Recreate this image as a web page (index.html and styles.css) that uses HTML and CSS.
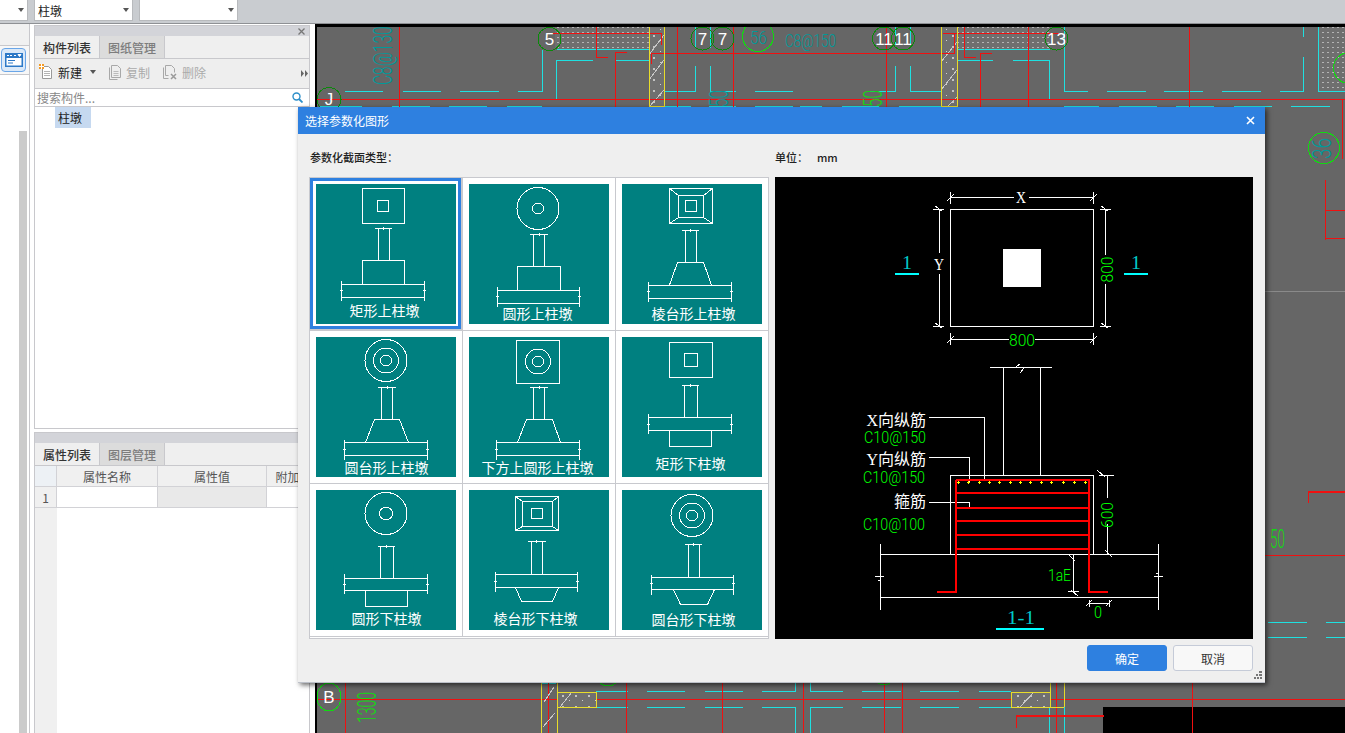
FILE: index.html
```html
<!DOCTYPE html>
<html lang="zh-CN">
<head>
<meta charset="utf-8">
<title>选择参数化图形</title>
<link rel="stylesheet" href="styles.css">
</head>
<body>
<header class="topbar">
  <div class="combo combo-a"><i class="caret"></i></div>
  <div class="combo combo-b"><span>柱墩</span><i class="caret"></i></div>
  <div class="combo combo-b"><i class="caret"></i></div>
</header>
<div class="main">
  <aside class="rail">
    <div class="rail-head"></div>
    <div class="rail-row">
      <button class="rail-btn">
        <svg width="18" height="14" viewBox="0 0 18 14"><rect x="0" y="0" width="18" height="14" fill="#2d79c7"/><rect x="1.500" y="5" width="15" height="7.500" fill="#fff"/><path d="M2 2.500h2M5 2.500h2M9 2.500h2M13 1.500h3l-1.500 2z" stroke="#fff" fill="#fff"/><path d="M3 7.500h7M3 10h5" stroke="#2d79c7"/></svg>
      </button>
    </div>
    <div class="rail-body"><div class="rail-track"></div></div>
  </aside>
  <div class="panels">
    <section class="panel panel-top">
      <div class="strip"><svg class="strip-x" width="7" height="7" viewBox="0 0 7 7"><path d="M.5.500l6 6M6.500.500l-6 6" stroke="#777" stroke-width="1.300"/></svg></div>
      <div class="tabs"><div class="tab on">构件列表</div><div class="tab">图纸管理</div></div>
      <div class="tools">
        <span class="tool">
          <svg width="15" height="16" viewBox="0 0 15 16"><path d="M3.500 2.500h6l3 3v9h-9z" fill="#fff" stroke="#9a9a9a"/><path d="M5 7.500h6M5 9.500h6M5 11.500h6" stroke="#b5b5b5"/><rect x="0" y="0" width="5" height="5" fill="#f59a23"/><path d="M0 2.500h5M2.500 0v5" stroke="#fff"/></svg>
          <b class="tool-on">新建</b><i class="caret caret-small"></i>
        </span>
        <span class="tool">
          <svg width="13" height="15" viewBox="0 0 13 15"><path d="M.5 2.500v12h8M2.500.500h6l3 3v9h-9z" fill="none" stroke="#a8a8a8"/><path d="M4.500 6.500h5M4.500 8.500h5M4.500 10.500h5" stroke="#bbb"/></svg>
          <b class="tool-off">复制</b>
        </span>
        <span class="tool">
          <svg width="15" height="15" viewBox="0 0 15 15"><path d="M.5 2.500v11h5M2.500.500h6l3 3v4M2.500.500v10h3" fill="none" stroke="#a8a8a8"/><path d="M8 9l5 5M13 9l-5 5" stroke="#9a9a9a" stroke-width="1.500"/></svg>
          <b class="tool-off">删除</b>
        </span>
        <svg class="more" width="7" height="7" viewBox="0 0 7 7"><path d="M0 0l3 3.500-3 3.500zM4 0l3 3.500-3 3.500z" fill="#666"/></svg>
      </div>
      <div class="search"><span>搜索构件...</span>
        <svg width="11" height="11" viewBox="0 0 11 11"><circle cx="4.500" cy="4.500" r="3.500" fill="none" stroke="#2d8fc9" stroke-width="1.400"/><path d="M7 7l3.500 3.500" stroke="#2d8fc9" stroke-width="1.800"/></svg>
      </div>
      <div class="tree"><span class="tree-item">柱墩</span></div>
    </section>
    <section class="panel panel-bottom">
      <div class="strip"></div>
      <div class="tabs"><div class="tab on">属性列表</div><div class="tab">图层管理</div></div>
      <div class="table">
        <div class="th gut-head"></div><div class="th">属性名称</div><div class="th">属性值</div><div class="th">附加</div>
        <div class="td gut">1</div><div class="td"></div><div class="td grey"></div><div class="td"></div>
        <div class="gut-rest"></div>
      </div>
    </section>
  </div>
  <main class="canvas">
    <svg class="plan" width="1028" height="706" viewBox="317 27 1028 706">
      <defs>
        <pattern id="dots" width="5" height="5" patternUnits="userSpaceOnUse"><rect width="5" height="5" fill="#6f6f6f"/><rect x="2" y="2" width="2" height="1" fill="#b4b4b4"/></pattern>
        <pattern id="specks" width="13" height="11" patternUnits="userSpaceOnUse"><rect width="13" height="11" fill="#707070"/><rect x="3" y="2" width="2" height="2" fill="#c4c4c4"/><rect x="10" y="7" width="1" height="1" fill="#d0d0d0"/></pattern>
      </defs>
      <rect x="317" y="27" width="1028" height="706" fill="#666"/>
      <rect x="555" y="27" width="94" height="22" fill="url(#dots)"/>
      <rect x="957" y="27" width="93" height="22" fill="url(#dots)"/>
      <rect x="1318" y="27" width="27" height="64" fill="url(#dots)"/>
      <rect x="649" y="27" width="15" height="80" fill="url(#specks)"/>
      <rect x="941" y="27" width="16" height="80" fill="url(#specks)"/>
      <path class="pl-hatch" d="M664 35l-15 20M664 60l-15 20M664 90l-15 17M957 42l-16 20M957 70l-16 20M957 97l-10 10"/>
      <path class="pl-cyan" d="M345 91h38M403 91h38M460 91h39M518 91h24V50M556.500 49h93M556.500 99V60.500H593M615 60.500h34M665 91h30.500V66M710.500 66V91h25M755 91h38M710.500 27v21M695.500 27v21M320 106.500h42M392 106.500h38M449 106.500h38M507 106.500h35M665 106.500h26M709 106.500h27M755 106.500h38M800 106.500h22M842 106.500h37M899 106.500h42M1064 106.500h35M1119 106.500h38M1176 106.500h38M1234 106.500h38M1291 106.500h39M895 66v25h-25M910.500 66v25h31M895 27v18M910.500 27v18M957 49h93M957 60.500h36M1012.500 60.500h37V99M1064.500 27v64h23M1106.500 91h39M1164 91h39M1222 91h39M1280 91h23V57M1303 27v10M1318.500 27v64H1345"/>
      <path class="pl-cyan" d="M596 691h32M647 691h38M705 691h38M762 691h33v-8M810 683v8h33M862 691h39M920 691h39M979 691h32M596 707h32M647 707h38M705 707h38M762 707h33v26M810 733v-26h33M862 707h39M920 707h39M979 707h32M1050 683v8M1049 707v26M1064 707v26M1268 622.500h39M1326 622.500h19M1268 637.500h39M1326 637.500h19M541 683h15M557 707v26"/>
      <rect x="1103" y="707" width="242" height="26" fill="#000"/>
      <g class="pl-reds">
        <path d="M317 99.500h1028"/>
        <path d="M317 699.500h1028"/>
        <path d="M399.500 27v80"/>
        <path d="M553 33.500h109"/>
        <path d="M943 33.500h116"/>
        <path d="M651 53.500h304"/>
        <path d="M677.500 27v80"/>
        <path d="M733.500 27v80"/>
        <path d="M886.500 27v80"/>
        <path d="M1028.500 27v80"/>
        <path d="M1189.500 27v80"/>
        <path d="M596.500 27v30.500H608"/>
        <path d="M626.500 52.500h-11V107"/>
        <path d="M661.500 33v12M651.500 53v11"/>
        <path d="M954.500 33v20"/>
        <path d="M964.500 27v30.500h11"/>
        <path d="M992 53.500h-11.500V107"/>
        <path d="M1342.500 99v60M1325.500 180v60M1325 210.500h20M1325 238.500h20M1308.500 503v-11h37M1265 555.500h80"/>
        <path d="M1192.500 683v50M345.500 683v50M548.500 683v50M626.500 683v50M722.500 683v50M803.500 683v50M884.500 683v50M902.500 683v50M1056.500 683v50M1016.500 728v-12h87"/>
      </g>
      <path class="pl-yellow" d="M649.500 27v80M664.500 27v80M649.500 106.500h15M941.500 27v80M957 27v80M941.500 106.500h16M541.500 683v50M557 683v9h39v15h-39v26M1011 692h39v-9M1011 692v15h53M1064 683v24"/>
      <rect x="557" y="692" width="39" height="15" fill="url(#specks)"/>
      <rect x="1011" y="692" width="39" height="15" fill="url(#specks)"/>
      <path class="pl-hatch" d="M560 707l12-15M544 702l10-15M543 727l12-14M1020 707l14-15"/>
      <path class="pl-yellow" d="M557 692h39v15h-39zM1011 692h39v15h-39z"/>
      <g class="pl-ring">
        <circle cx="549.500" cy="39" r="11.500"/><circle cx="702.500" cy="38.500" r="11.500"/><circle cx="722.500" cy="38.500" r="11.500"/>
        <circle cx="884" cy="38.500" r="11.500"/><circle cx="903" cy="38.500" r="11.500"/><circle cx="1056.500" cy="38.500" r="11.500"/>
        <circle cx="329" cy="99.500" r="12"/>
      </g>
      <g class="pl-bright">
        <circle cx="758" cy="36" r="15.500"/><circle cx="1324" cy="148" r="15.500"/><circle cx="1349" cy="68" r="15.500"/>
        <ellipse cx="329" cy="697" rx="12" ry="14"/><circle cx="608" cy="675" r="11"/><circle cx="884" cy="675" r="10"/>
      </g>
      <g class="pl-num">
        <text x="549.500" y="45">5</text><text x="702.500" y="45">7</text><text x="722.500" y="45">7</text>
        <text x="884" y="45">11</text><text x="903" y="45">11</text><text x="1056.500" y="45">13</text>
        <text x="329" y="105">J</text><text x="329" y="703">B</text>
      </g>
      <g class="pl-teal">
        <text transform="translate(392 85) rotate(-90) scale(.62 1)">C8@130</text>
        <text class="small" x="785" y="47" textLength="51" lengthAdjust="spacingAndGlyphs">C8@150</text>
        <text class="small" x="750" y="44" textLength="17" lengthAdjust="spacingAndGlyphs">56</text>
        <text x="728" y="107" transform="rotate(-90 728 107)" textLength="17" lengthAdjust="spacingAndGlyphs">50</text>
        <text x="1331" y="159" transform="rotate(-90 1331 159)" textLength="21" lengthAdjust="spacingAndGlyphs">36</text>
      </g>
      <g class="pl-green">
        <text x="882" y="107" transform="rotate(-90 882 107)" textLength="17" lengthAdjust="spacingAndGlyphs">50</text>
        <text x="1270" y="548" textLength="15" lengthAdjust="spacingAndGlyphs">50</text>
        <text x="376" y="723" transform="rotate(-90 376 723)" textLength="31" lengthAdjust="spacingAndGlyphs">1300</text>
      </g>
      <rect x="1265" y="291" width="80" height="1" fill="#8a8a8a"/>
    </svg>
  </main>
</div>

<div class="dialog">
  <div class="dlg-title"><span>选择参数化图形</span>
    <svg width="9" height="9" viewBox="0 0 9 9"><path d="M1 1l7 7M8 1l-7 7" stroke="#fff" stroke-width="1.600"/></svg>
  </div>
  <div class="dlg-labels">
    <div class="lbl-left">参数化截面类型：</div>
    <div class="lbl-right"><span>单位：</span><span>mm</span></div>
  </div>
  <div class="dlg-body">
    <div class="grid">
      <div class="cell sel">
        <svg class="tile" width="140" height="140" viewBox="0 0 140 140"><path class="ln" d="M46.500 4.500h42v35h-42zM61.500 16.500h11v11h-11zM58.500 44.500h17M67 43v3M62.500 44.500v32M73.500 44.500v32M46.500 76.500h42v24h-42zM25.500 100.500h83v13h-83zM25.500 97v20M108.500 97v20M24 106.500h3M107 106.500h3"/><text class="tl" x="68.500" y="132">矩形上柱墩</text></svg>
      </div>
      <div class="cell">
        <svg class="tile" width="140" height="140" viewBox="0 0 140 140"><circle class="ln" cx="69" cy="24.500" r="21"/><circle class="ln" cx="69" cy="24.500" r="5.500"/><path class="ln" d="M60.500 50.500h18M70 49v3M64.500 50.500v32M75.500 50.500v32M48.500 82.500h43v24h-43zM28.500 106.500h82v13h-82zM28.500 103v20M110.500 103v20M27 112.500h3M109 112.500h3"/><text class="tl" x="68.500" y="134.500">圆形上柱墩</text></svg>
      </div>
      <div class="cell">
        <svg class="tile" width="140" height="140" viewBox="0 0 140 140"><path class="ln" d="M47.500 4.500h43v35h-43zM56.500 11.500h25v22h-25zM63.500 16.500h11v11h-11zM47.500 4.500l9 7M90.500 4.500l-9 7M47.500 39.500l9-6M90.500 39.500l-9-6M59.500 46.500h17M68 45v3M63.500 46.500v32M74.500 46.500v32M55.500 78.500h26l8 22.500M55.500 78.500l-8 22.500M26.500 101.500h83v13h-83zM26.500 98v20M109.500 98v20M25 107.500h3M108 107.500h3"/><text class="tl" x="71.500" y="134.500">棱台形上柱墩</text></svg>
      </div>
      <div class="cell">
        <svg class="tile" width="140" height="140" viewBox="0 0 140 140"><circle class="ln" cx="70" cy="23.500" r="21"/><circle class="ln" cx="70" cy="23.500" r="12.500"/><circle class="ln" cx="70" cy="23.500" r="5.500"/><path class="ln" d="M61.500 50.500h18M71 49v3M65.500 50.500v32M76.500 50.500v32M58.500 82.500h25l9 23M58.500 82.500l-9 23M28.500 105.500h83v13h-83zM28.500 103v20M111.500 103v20M27 112.500h3M110 112.500h3"/><text class="tl" x="70.500" y="135.500">圆台形上柱墩</text></svg>
      </div>
      <div class="cell">
        <svg class="tile" width="140" height="140" viewBox="0 0 140 140"><path class="ln" d="M47.500 3.500h43v43h-43z"/><circle class="ln" cx="69" cy="24.500" r="12.500"/><circle class="ln" cx="69" cy="24.500" r="5.500"/><path class="ln" d="M60.500 50.500h18M70 49v3M64.500 50.500v32M75.500 50.500v32M57.500 82.500h26l8 23M57.500 82.500l-9 23M27.500 105.500h83v13h-83zM27.500 103v20M110.500 103v20M26 112.500h3M109 112.500h3"/><text class="tl" x="68.500" y="135.500">下方上圆形上柱墩</text></svg>
      </div>
      <div class="cell">
        <svg class="tile" width="140" height="140" viewBox="0 0 140 140"><path class="ln" d="M47.500 5.500h43v35h-43zM62.500 16.500h13v13h-13zM59.500 48.500h17M68 47v3M62.500 48.500v32M75.500 48.500v32M26.500 80.500h83v13h-83zM26.500 77v20M109.500 77v20M25 87.500h3M108 87.500h3M47.500 93.500v16h42v-16"/><text class="tl" x="68.500" y="131.500">矩形下柱墩</text></svg>
      </div>
      <div class="cell">
        <svg class="tile" width="140" height="140" viewBox="0 0 140 140"><circle class="ln" cx="70" cy="23.500" r="21"/><circle class="ln" cx="70" cy="23.500" r="6.500"/><path class="ln" d="M61.500 56.500h17M70 55v3M64.500 56.500v32M77.500 56.500v32M28.500 88.500h83v12h-83zM28.500 84v20M111.500 84v20M27 94.500h3M110 94.500h3M49.500 100.500v16h42v-16"/><text class="tl" x="70.500" y="133.500">圆形下柱墩</text></svg>
      </div>
      <div class="cell">
        <svg class="tile" width="140" height="140" viewBox="0 0 140 140"><path class="ln" d="M46.500 6.500h43v34h-43zM53.500 11.500h30v25h-30zM62.500 18.500h11v10h-11zM46.500 6.500l7 5M89.500 6.500l-6 5M46.500 40.500l7-4M89.500 40.500l-6-4M58.500 51.500h18M67 50v3M62.500 51.500v33M73.500 51.500v33M26.500 84.500h82v13h-82zM26.500 82v20M108.500 82v20M25 91.500h3M107 91.500h3M46.500 97.500l6 14h31l6-14"/><text class="tl" x="66.500" y="133.500">棱台形下柱墩</text></svg>
      </div>
      <div class="cell">
        <svg class="tile" width="140" height="140" viewBox="0 0 140 140"><circle class="ln" cx="70" cy="25.500" r="21"/><circle class="ln" cx="70" cy="25.500" r="12.500"/><circle class="ln" cx="70" cy="25.500" r="5.500"/><path class="ln" d="M62.500 54.500h17M71 53v3M66.500 54.500v33M77.500 54.500v33M29.500 87.500h82v12h-82zM29.500 85v20M111.500 85v20M28 93.500h3M110 93.500h3M51.500 99.500l7 15h27l7-15"/><text class="tl" x="71.500" y="134.500">圆台形下柱墩</text></svg>
      </div>
    </div>
    <div class="preview">
      <svg class="pv" width="478" height="462" viewBox="0 0 478 462">
        <path class="pw" d="M175.500 32.500h143v117h-143z"/>
        <rect x="228" y="72" width="38" height="38" fill="#fff"/>
        <path class="pw" d="M175.500 20.500h63M254 20.500h64.500M175.500 15v12M318.500 15v12M172 24l7-7M315 24l7-7M164.500 32.500v43M164.500 97v52.500M158 32.500h11M158 149.500h11M160 29l7 5M160 146l7 5M330.500 32.500v45M330.500 107v42.500M325 32.500h11M325 149.500h11M326 29l7 5M326 146l7 5M175.500 162.500h58M260 162.500h58.500M175.500 156v12M318.500 156v12M172 166l7-7M315 166l7-7"/>
        <path class="pw" d="M228.500 190.500v108M265.500 190.500v108M215 190.500h62M245 187l-4 3 8 1-4 5M175.500 377.500v-79h143v79M105.500 377.500h278M105.500 420.500h278M105.500 367v66M383.500 367v66M100 399.500h9M103 403h3M379 399.500h9M381 396h3M154 240.500h55.500v63M154 280.500h40.500v24.500M154 325.500h40.500v5"/>
        <path class="pw" d="M332.500 298.500v22M332.500 347v30.500M324 298.500h15M322 293l8 7M330 373l7 7M298.500 377.500v37M293 377l7 7M293 414.500h11M296 413l7 6M314 426.500h20M314 423v7M334 423v7M311 429l6-6M331 429l6-6"/>
        <path class="pred" d="M180.500 303h134M180.500 303v112h-19M314 303v112h19"/>
        <path class="pred-thin" d="M181 315.500h133M181 330.500h133M181 343.500h133M181 357.500h133M181 371.500h133"/>
        <path class="pyel" d="M182 305.500h3M183.500 304v3M192 305.500h3M193.500 304v3M203 305.500h3M204.500 304v3M213 305.500h3M214.500 304v3M223 305.500h3M224.500 304v3M234 305.500h3M235.500 304v3M244 305.500h3M245.500 304v3M254 305.500h3M255.500 304v3M265 305.500h3M266.500 304v3M275 305.500h3M276.500 304v3M287 305.500h3M288.500 304v3M298 305.500h3M299.500 304v3M309 305.500h3M310.500 304v3"/>
        <path class="pcy" d="M120 97h24M349 97h24M221 451.500h48"/>
        <g class="cad-white">
          <text x="241" y="26" textLength="10" lengthAdjust="spacingAndGlyphs">X</text>
          <text x="159" y="93" textLength="10" lengthAdjust="spacingAndGlyphs">Y</text>
        </g>
        <g class="cad-green">
          <text x="234" y="169" textLength="26" lengthAdjust="spacingAndGlyphs">800</text>
          <text x="338" y="105.500" transform="rotate(-90 338 105.500)" textLength="26" lengthAdjust="spacingAndGlyphs">800</text>
          <text x="338" y="351" transform="rotate(-90 338 351)" textLength="26" lengthAdjust="spacingAndGlyphs">600</text>
          <text x="319" y="441" textLength="8" lengthAdjust="spacingAndGlyphs">0</text>
          <text x="273" y="404" textLength="23" lengthAdjust="spacingAndGlyphs">1aE</text>
          <text x="89" y="266" textLength="62" lengthAdjust="spacingAndGlyphs">C10@150</text>
          <text x="88" y="306" textLength="62" lengthAdjust="spacingAndGlyphs">C10@150</text>
          <text x="88" y="353" textLength="62" lengthAdjust="spacingAndGlyphs">C10@100</text>
        </g>
        <g class="cad-cyan">
          <text x="127" y="92" textLength="10" lengthAdjust="spacingAndGlyphs">1</text>
          <text x="356" y="92" textLength="10" lengthAdjust="spacingAndGlyphs">1</text>
          <text x="232" y="447" textLength="28" lengthAdjust="spacingAndGlyphs">1-1</text>
        </g>
        <g class="cad-label">
          <text x="151" y="249">X向纵筋</text>
          <text x="151" y="288">Y向纵筋</text>
          <text x="151" y="330">箍筋</text>
        </g>
      </svg>
    </div>
  </div>
  <div class="dlg-foot">
    <button class="btn btn-primary">确定</button>
    <button class="btn">取消</button>
  </div>
  <svg class="grip" width="8" height="8" viewBox="0 0 8 8"><path d="M5 0h3v2H5zM2 3h2v2H2zM5 3h3v2H5zM0 6h2v2H0zM3 6h2v2H3zM6 6h2v2H6z" fill="#777"/></svg>
</div>
</body>
</html>
```
FILE: styles.css
```css
* { box-sizing: border-box; }
html, body { margin: 0; height: 100%; }
body {
  width: 1345px;
  height: 733px;
  overflow: hidden;
  display: flex;
  flex-direction: column;
  position: relative;
  background: #fff;
  font: 12px "Noto Sans CJK SC", "Liberation Sans", sans-serif;
  color: #222;
}

/* top bar */
.topbar {
  height: 24px;
  flex: none;
  display: flex;
  gap: 6px;
  background: #c9ccd0;
  border-bottom: 1px solid #8e9094;
}
.combo {
  height: 21px;
  background: #fff;
  border: 1px solid #b8babd;
  border-top: 0;
  position: relative;
  display: flex;
  align-items: center;
  padding-left: 3px;
  font-size: 12px;
}
.combo-a { width: 28px; border-left: 0; }
.combo-b { width: 99px; }
.caret {
  position: absolute;
  right: 3px;
  top: 8px;
  border: 3px solid transparent;
  border-top: 4px solid #555;
  border-bottom: 0;
}
.caret-small { position: static; display: inline-block; margin-left: 5px; vertical-align: middle; }

.main { flex: 1; display: flex; min-height: 0; }

/* left rail */
.rail { width: 34px; flex: none; display: flex; flex-direction: column; }
.rail-head { height: 22px; width: 30px; flex: none; background: #f1f1f1; border-right: 1px solid #c8c8cc; border-bottom: 1px solid #c8c8cc; }
.rail-row {
  height: 29px;
  width: 30px;
  flex: none;
  background: #f7f7f7;
  border-right: 1px solid #c8c8cc;
  border-bottom: 1px solid #c8c8cc;
  padding: 2px 0 0 1px;
}
.rail-btn {
  display: flex;
  align-items: center;
  justify-content: center;
  width: 25px;
  height: 24px;
  padding: 0;
  background: #dbe9f8;
  border: 1px solid #6aa6e8;
  border-radius: 4px;
}
.rail-body {
  flex: 1;
  width: 30px;
  display: flex;
  padding: 56px 2px 0 19px;
  border-right: 1px solid #c8c8cc;
}
.rail-track { flex: 1; background: #cbcbcb; }

/* dock panels */
.panels { width: 276px; flex: none; display: flex; flex-direction: column; padding-top: 1px; gap: 3px; }
.panel { border: 1px solid #c8c8cc; display: flex; flex-direction: column; background: #fff; overflow: hidden; min-height: 0; }
.panel-top { height: 404px; flex: none; }
.panel-bottom { flex: 1; border-bottom: 0; }
.strip { height: 10px; flex: none; background: #d3d4d9; display: flex; justify-content: flex-end; align-items: center; padding-right: 4px; }
.strip-x { display: block; }
.tabs { height: 23px; flex: none; display: flex; background: #efefef; border-bottom: 1px solid #c8c8cc; }
.tab {
  width: 65px;
  display: flex;
  align-items: center;
  justify-content: center;
  background: #dcdcdc;
  color: #7d7d7d;
  border-right: 1px solid #c8c8cc;
  font-weight: 500;
}
.tab.on { background: #efefef; color: #333; }
.tools { height: 29px; flex: none; display: flex; align-items: center; background: #eeeeee; padding: 0 0 3px 4px; gap: 13px; position: relative; }
.tool { display: flex; align-items: center; gap: 3px; }
.tool b { font-weight: 400; }
.tool-on { color: #222; margin-left: 1px; }
.tool-off { color: #aaa; margin-left: 1px; }
.more { position: absolute; right: 1px; top: 11px; }
.search {
  height: 19px;
  flex: none;
  display: flex;
  align-items: center;
  justify-content: space-between;
  padding: 0 6px 0 2px;
  color: #888;
  border-top: 1px solid #c8c8cc;
  border-bottom: 1px solid #c8c8cc;
}
.tree { flex: 1; padding-left: 20px; }
.tree-item { display: flex; align-items: center; padding-left: 3px; width: 36px; height: 21px; background: #c6d9f0; }

.table {
  flex: 1;
  display: grid;
  grid-template-columns: 22px 101px 109px 1fr;
  grid-template-rows: 21px 21px 1fr;
  color: #555;
}
.th, .td { border-right: 1px solid #d2d2d6; border-bottom: 1px solid #d2d2d6; display: flex; align-items: center; justify-content: center; }
.th { background: #f0f0f0; white-space: nowrap; overflow: hidden; }
.th:last-of-type { justify-content: flex-start; padding-left: 7px; }
.gut-head { background: #edf1f5; }
.gut { background: #f0f0f0; }
.grey { background: #e9e9e9; }
.gut-rest { background: #f0f0f0; }

/* CAD canvas */
.canvas {
  margin-left: 5px;
  width: 1030px;
  flex: none;
  border-top: 3px solid #000;
  border-left: 2px solid #000;
  background: #666;
  overflow: hidden;
}
.plan { display: block; shape-rendering: crispEdges; }
.pl-cyan, .pl-yellow, .pl-hatch { fill: none; stroke-width: 1; }
.pl-reds { fill: none; stroke: #f01010; stroke-width: 1.2; }
.pl-cyan { stroke: #1fe0e0; }
.pl-yellow { stroke: #e8dc2a; }
.pl-hatch { stroke: #c8c8c8; }
.pl-ring circle { fill: none; stroke: #0a8a0a; }
.pl-bright circle, .pl-bright ellipse { fill: none; stroke: #12d812; }
.pl-num text { fill: #fff; font: 17px "Liberation Sans", sans-serif; text-anchor: middle; }
.pl-teal text { fill: #009a9a; font: 300 25px Roboto, "Liberation Sans", sans-serif; }
.pl-teal text.small { font-size: 18px; }
.pl-green text { fill: #12d812; font: 300 25px Roboto, "Liberation Sans", sans-serif; }

/* dialog */
.dialog {
  position: absolute;
  left: 298px;
  top: 107px;
  width: 967px;
  height: 576px;
  background: #efefef;
  border-bottom: 1px solid #bcc0c8;
  box-shadow: 2px 2px 5px rgba(0, 0, 0, .6);
  display: flex;
  flex-direction: column;
}
.dlg-title {
  height: 27px;
  flex: none;
  background: #2e80e0;
  color: #fff;
  display: flex;
  align-items: center;
  justify-content: space-between;
  padding: 0 10px 0 7px;
}
.dlg-labels { height: 43px; flex: none; display: flex; align-items: flex-end; padding: 0 0 12px 12px; color: #222; font-weight: 500; font-size: 11px; }
.lbl-left { width: 465px; }
.lbl-right { display: flex; gap: 9px; }
.dlg-body { display: flex; gap: 6px; padding-left: 11px; height: 462px; flex: none; }
.grid {
  width: 460px;
  height: 462px;
  display: grid;
  grid-template-columns: repeat(3, 152px);
  grid-template-rows: 152px 152px 152px 1px;
  gap: 1px;
  background: #c8c9ce;
  border: 1px solid #c8c9ce;
}
.grid::after { content: ""; grid-column: 1 / -1; background: #fff; }
.cell { background: #fff; padding: 6px; }
.cell.sel { box-shadow: inset 0 0 0 3px #2e80e0; margin: 0 1px 1px 0; padding: 6px 5px 5px 6px; }
.tile { display: block; background: #008080; shape-rendering: crispEdges; }
.ln { fill: none; stroke: #fff; stroke-width: 1; }
.tl { fill: #fff; font: 400 14px "Noto Sans CJK SC", sans-serif; text-anchor: middle; }

.preview { width: 478px; height: 462px; background: #000; flex: none; }
.pv { display: block; shape-rendering: crispEdges; }
.pw { fill: none; stroke: #fff; stroke-width: 1; }
.pred { fill: none; stroke: #f00; stroke-width: 2; }
.pred-thin { fill: none; stroke: #f00; stroke-width: 2; }
.pyel { fill: none; stroke: #ff0; stroke-width: 1; }
.pcy { fill: none; stroke: #0ff; stroke-width: 2; }
.cad-white text { fill: #fff; font: 16px "Liberation Serif", serif; }
.cad-green text { fill: #0f0; font: 300 17px Roboto, "Liberation Sans", sans-serif; }
.cad-cyan text { fill: #00c8c8; font: 19px "Liberation Serif", serif; }
.cad-label text { fill: #fff; font: 400 16px "Liberation Serif", "Noto Sans CJK SC", serif; text-anchor: end; }

.dlg-foot { flex: 1; display: flex; justify-content: flex-end; align-items: flex-start; gap: 6px; padding: 6px 12px 0 0; }
.btn {
  width: 80px;
  height: 26px;
  padding: 0;
  border: 1px solid #c5cbd8;
  border-radius: 3px;
  background: #f8f8f8;
  color: #333;
  font: 12px "Noto Sans CJK SC", sans-serif;
}
.btn-primary { background: #2e80e0; border-color: #2e80e0; color: #fff; }
.grip { position: absolute; right: 3px; bottom: 3px; }
```
